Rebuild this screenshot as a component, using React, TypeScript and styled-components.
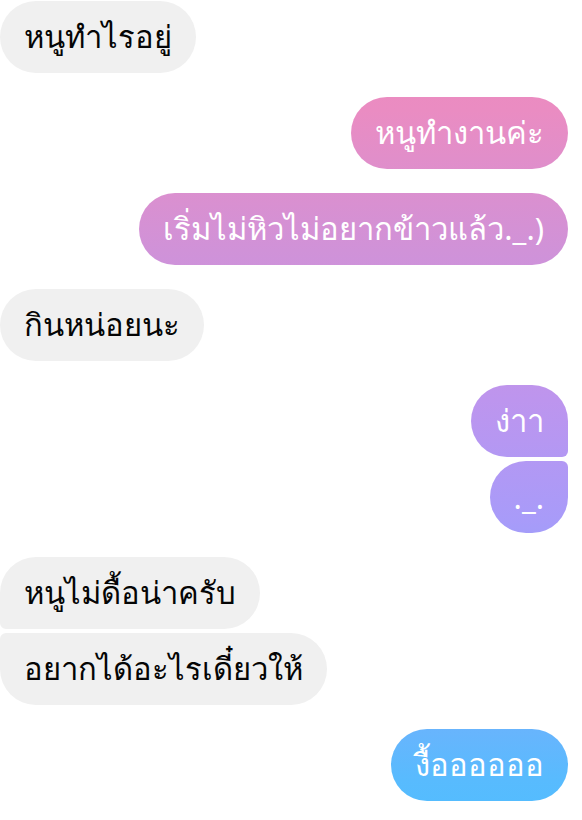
import React from 'react'
import styled, { createGlobalStyle, css } from 'styled-components'

const GlobalStyle = createGlobalStyle`
    html, body {
        margin: 0;
        padding: 0;
        background: #ffffff;
    }
    body {
        font-family: "Noto Sans", "Liberation Sans", sans-serif;
    }
`;

const Thread = styled.div`
    width: 582px;
    height: 820px;
    box-sizing: border-box;
    padding: 1px 14px 0 0;
    display: flex;
    flex-direction: column;
    overflow: hidden;
`;

const Group = styled.div<{ own?: boolean }>`
    display: flex;
    flex-direction: column;
    align-items: ${p => (p.own ? 'flex-end' : 'flex-start')};
    gap: 4px;
    margin-bottom: 24px;
`;

type Pos = 'single' | 'first' | 'last';

const Bubble = styled.div<{ own?: boolean; pos: Pos }>`
    height: 72px;
    box-sizing: border-box;
    padding: 0 24px;
    display: flex;
    align-items: center;
    font-size: 31px;
    white-space: nowrap;
    border-radius: 36px;

    ${p => p.own
        ? css`
            color: #ffffff;
            background-image: linear-gradient(
                to bottom,
                #f08ab9 0px,
                #ea8cc2 110px,
                #d092d8 250px,
                #bd95ee 400px,
                #a89bf9 520px,
                #84a9fb 640px,
                #58bbfe 780px,
                #52bdff 820px
            );
            background-attachment: fixed;
        `
        : css`
            color: #050505;
            background: #f0f0f0;
        `}

    ${p => p.pos === 'first' && (p.own
        ? css`border-bottom-right-radius: 6px;`
        : css`border-bottom-left-radius: 6px;`)}

    ${p => p.pos === 'last' && (p.own
        ? css`border-top-right-radius: 6px;`
        : css`border-top-left-radius: 6px;`)}
`;

interface Msg {
    own: boolean;
    lines: string[];
}

const messages: Msg[] = [
    { own: false, lines: ['หนูทำไรอยู่'] },
    { own: true, lines: ['หนูทำงานค่ะ'] },
    { own: true, lines: ['เริ่มไม่หิวไม่อยากข้าวแล้ว._.)'] },
    { own: false, lines: ['กินหน่อยนะ'] },
    { own: true, lines: ['ง่าา', '._.'] },
    { own: false, lines: ['หนูไม่ดื้อน่าครับ', 'อยากได้อะไรเดี๋ยวให้'] },
    { own: true, lines: ['งื้ออออออ'] },
]

function posOf(i: number, n: number): Pos {
    if (n === 1) return 'single'
    return i === 0 ? 'first' : 'last'
}

export default function App() {
    return (
        <>
            <GlobalStyle />
            <Thread>
                {messages.map((m, gi) => (
                    <Group key={gi} own={m.own}>
                        {m.lines.map((t, i) => (
                            <Bubble key={i} own={m.own} pos={posOf(i, m.lines.length)}>
                                {t}
                            </Bubble>
                        ))}
                    </Group>
                ))}
            </Thread>
        </>
    )
}
